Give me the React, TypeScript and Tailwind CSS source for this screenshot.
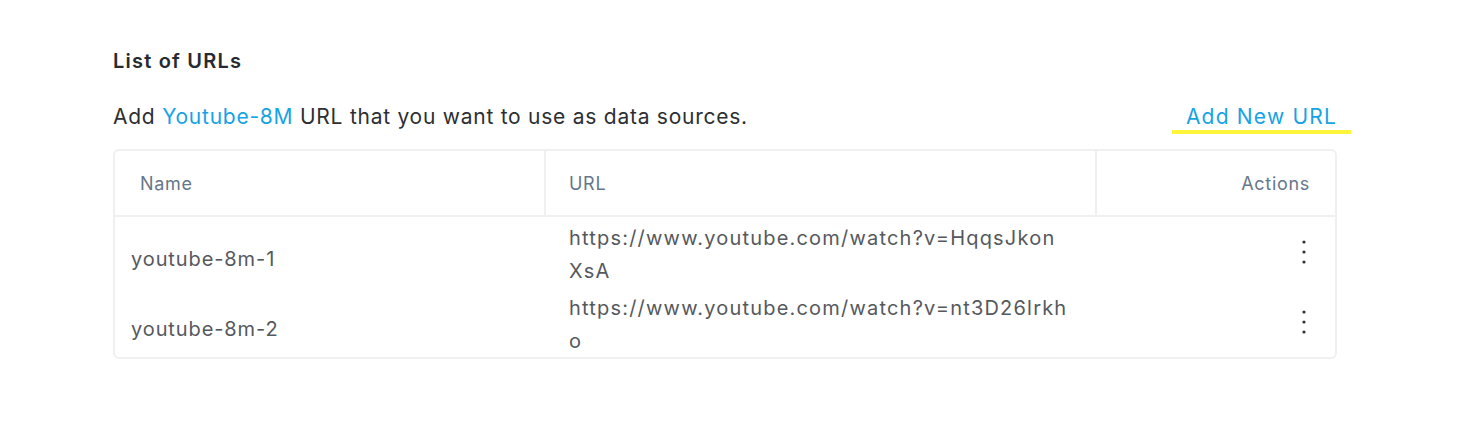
import React from 'react';

const rows = [
  { name: 'youtube-8m-1', url: 'https://www.youtube.com/watch?v=HqqsJkonXsA' },
  { name: 'youtube-8m-2', url: 'https://www.youtube.com/watch?v=nt3D26lrkho' },
];

const KebabIcon = () => (
  <svg width="4" height="24" viewBox="0 0 4 24" className="text-[#2f3338]">
    <circle cx="2" cy="2" r="1.6" fill="currentColor" />
    <circle cx="2" cy="12" r="1.6" fill="currentColor" />
    <circle cx="2" cy="22" r="1.6" fill="currentColor" />
  </svg>
);

export default function App() {
  return (
    <div
      className="w-[1458px] h-[444px] bg-white pl-[113px] pt-[48px]"
      style={{ fontFamily: 'Inter, "Open Sans", sans-serif' }}
    >
      <h2 className="text-[20px] leading-[26px] font-semibold tracking-[1.2px] text-[#262b31]">List of URLs</h2>

      <div className="mt-[26px] flex w-[1238px] items-center justify-between">
        <p className="text-[21px] leading-[28px] tracking-[0.75px] text-[#2c2f33]">
          Add <span className="text-[#16a3e6]">Youtube-8M</span> URL that you want to use as data sources.
        </p>
        <button className="mt-[4px] px-[14px] border-b-[4px] border-[#fdf53a] text-[21px] leading-[26px] tracking-[1.2px] text-[#16a3e6]">
          Add New URL
        </button>
      </div>

      <div className="mt-[15px] w-[1224px] rounded-md border-2 border-[#eef0f2] overflow-hidden">
        <div className="grid grid-cols-[431px_551px_1fr] border-b-2 border-[#eef0f2] text-[18px] tracking-[0.7px] text-[#66778a]">
          <div className="h-[64px] flex items-center pl-[25px] border-r-2 border-[#eef0f2]">Name</div>
          <div className="h-[64px] flex items-center pl-[23px] border-r-2 border-[#eef0f2]">URL</div>
          <div className="h-[64px] flex items-center justify-end pr-[25px]">Actions</div>
        </div>
        {rows.map((row) => (
          <div
            key={row.name}
            className="grid grid-cols-[431px_551px_1fr] text-[20px] text-[#55595e]"
          >
            <div className="flex items-center pl-[16px] pt-[14px] tracking-[0.9px]">{row.name}</div>
            <div className="pl-[23px] pr-[29px] pt-[5px] leading-[32.5px] break-all tracking-[1.2px]">{row.url}</div>
            <div className="flex items-center justify-end pr-[29px]">
              <KebabIcon />
            </div>
          </div>
        ))}
      </div>
    </div>
  );
}
